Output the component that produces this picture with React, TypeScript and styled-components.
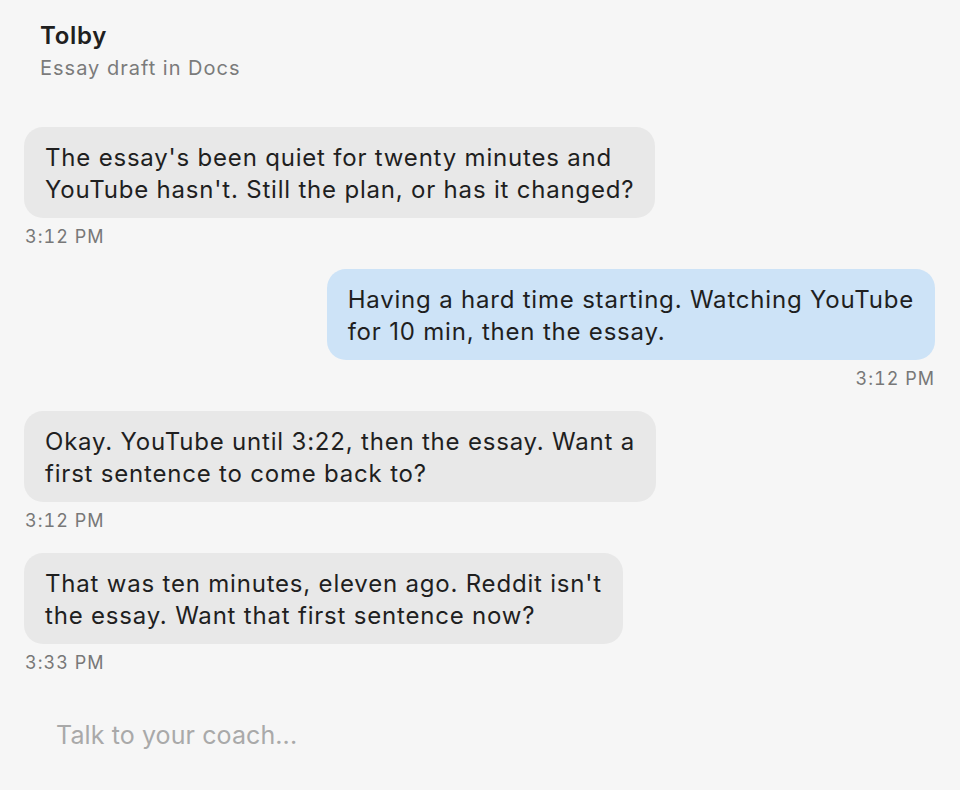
import React from "react";
import styled, { createGlobalStyle } from "styled-components";

const Global = createGlobalStyle`
  html, body { margin: 0; padding: 0; background: #f6f6f6; }
  body { font-family: Inter, "Noto Sans", sans-serif; -webkit-font-smoothing: antialiased; }
  * { box-sizing: border-box; }
`;

const Page = styled.div`
  width: 960px;
  height: 790px;
  background: #f6f6f6;
  display: flex;
  flex-direction: column;
  overflow: hidden;
`;

const Header = styled.header`
  padding: 21px 40px 0 40px;
  display: flex;
  flex-direction: column;
  gap: 4px;
`;

const Title = styled.div`
  font-size: 24px;
  font-weight: 600;
  letter-spacing: 0.7px;
  color: #202020;
  line-height: 30px;
`;

const Subtitle = styled.div`
  font-size: 20px;
  letter-spacing: 1px;
  color: #7b7b7b;
  line-height: 26px;
`;

const Thread = styled.div`
  padding: 46px 25px 0 24px;
  display: flex;
  flex-direction: column;
  gap: 22px;
`;

const Group = styled.div<{ $mine?: boolean }>`
  display: flex;
  flex-direction: column;
  align-items: ${(p) => (p.$mine ? "flex-end" : "flex-start")};
  gap: 9px;
`;

const Bubble = styled.div<{ $mine?: boolean }>`
  padding: 15px 21px 12px 21px;
  border-radius: 19px;
  font-size: 24px;
  letter-spacing: 0.8px;
  line-height: 32px;
  color: #1f1f1f;
  white-space: nowrap;
  background: ${(p) => (p.$mine ? "#cde3f7" : "#e8e8e8")};
`;

const Time = styled.div`
  font-size: 18px;
  line-height: 20px;
  letter-spacing: 1px;
  font-variant-numeric: tabular-nums;
  color: #787878;
  padding: 0 0 0 1px;
`;

const Composer = styled.div`
  padding: 34px 24px 0 24px;
`;

const Input = styled.input`
  width: 100%;
  border: none;
  outline: none;
  background: transparent;
  font-family: Inter, "Noto Sans", sans-serif;
  font-size: 25px;
  letter-spacing: 0.1px;
  line-height: 32px;
  height: 56px;
  padding: 12px 32px;
  color: #1f1f1f;
  &::placeholder { color: #a9a9a9; }
`;

const messages = [
  {
    mine: false,
    lines: ["The essay's been quiet for twenty minutes and", "YouTube hasn't. Still the plan, or has it changed?"],
    time: "3:12 PM",
  },
  {
    mine: true,
    lines: ["Having a hard time starting. Watching YouTube", "for 10 min, then the essay."],
    time: "3:12 PM",
  },
  {
    mine: false,
    lines: ["Okay. YouTube until 3:22, then the essay. Want a", "first sentence to come back to?"],
    time: "3:12 PM",
  },
  {
    mine: false,
    lines: ["That was ten minutes, eleven ago. Reddit isn't", "the essay. Want that first sentence now?"],
    time: "3:33 PM",
  },
];

export default function App() {
  return (
    <Page>
      <Global />
      <Header>
        <Title>Tolby</Title>
        <Subtitle>Essay draft in Docs</Subtitle>
      </Header>
      <Thread>
        {messages.map((m, i) => (
          <Group key={i} $mine={m.mine}>
            <Bubble $mine={m.mine}>
              {m.lines.map((l, j) => (
                <React.Fragment key={j}>
                  {j > 0 && <br />}
                  {l}
                </React.Fragment>
              ))}
            </Bubble>
            <Time>{m.time}</Time>
          </Group>
        ))}
      </Thread>
      <Composer>
        <Input placeholder="Talk to your coach..." />
      </Composer>
    </Page>
  );
}
